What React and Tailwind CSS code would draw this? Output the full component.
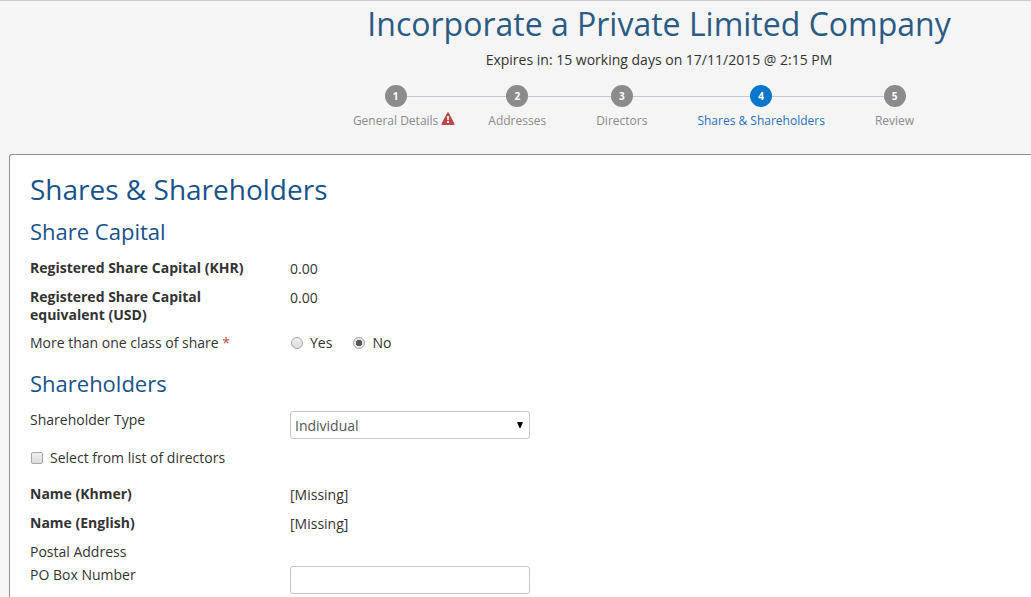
import React, { useState } from "react";
import clsx from "clsx";

const steps = [
  { label: "General Details", warning: true },
  { label: "Addresses" },
  { label: "Directors" },
  { label: "Shares & Shareholders", current: true },
  { label: "Review" },
];

const WarningIcon = () => (
  <svg
    viewBox="0 0 14 13"
    className="absolute left-full top-0 ml-[3px] h-[13px] w-[14px]"
    role="img"
    aria-label="Has errors"
  >
    <path
      d="M6.2.8a.9.9 0 0 1 1.6 0l5.6 10.8a.9.9 0 0 1-.8 1.3H1.4a.9.9 0 0 1-.8-1.3z"
      fill="#b94a48"
    />
    <path d="M6 4h2l-.3 4H6.3zM6 9h2v2H6z" fill="#f5f5f5" />
  </svg>
);

const Steps = () => (
  <ol className="flex justify-center pr-[51px]">
    {steps.map(({ label, warning, current }, i) => (
      <li
        key={label}
        className="flex flex-col"
        aria-current={current ? "step" : undefined}
      >
        <div className="flex items-center">
          <span
            className={clsx("h-px flex-1", i > 0 && "bg-[#c6c8d4]")}
          ></span>
          <span
            className={clsx(
              "flex size-[22px] items-center justify-center rounded-full text-[10px] font-bold text-white",
              current ? "bg-[#0a77cb]" : "bg-[#8b8b8b]"
            )}
          >
            {i + 1}
          </span>
          <span
            className={clsx(
              "h-px flex-1",
              i < steps.length - 1 && "bg-[#c6c8d4]"
            )}
          ></span>
        </div>
        <a
          href="#"
          className={clsx(
            "relative mx-[25px] mt-[5px] whitespace-nowrap text-[12px] leading-[18px]",
            current ? "text-[#2a70bd]" : "text-[#8b8b8b]"
          )}
        >
          {label}
          {warning && <WarningIcon />}
        </a>
      </li>
    ))}
  </ol>
);

const Row = ({ label, value }) => (
  <div className="flex">
    <dt className="w-[260px] pr-10 font-bold">{label}</dt>
    <dd className="pt-px">{value}</dd>
  </div>
);

const Radio = ({ label, ...props }) => (
  <label className="flex items-center gap-[7px]">
    <input
      type="radio"
      className="size-3 appearance-none rounded-full border border-[#a6a6a6] bg-linear-to-b from-[#f0f0f0] to-[#dcdcdc] checked:bg-radial checked:from-[#555] checked:from-45% checked:to-[#e6e6e6] checked:to-50%"
      {...props}
    />
    {label}
  </label>
);

export default function App() {
  const [multiClass, setMultiClass] = useState("no");

  return (
    <div className="flex min-h-screen flex-col overflow-hidden border-t border-[#cbcbcb] bg-[#f5f5f5] font-['Open_Sans',sans-serif] text-[14px] leading-[18px] text-[#333]">
      <header className="pl-[287px] text-center">
        <h1 className="whitespace-nowrap pt-[3px] text-[32px] leading-10 text-[#2a5b84]">
          Incorporate a Private Limited Company
        </h1>
        <p className="pb-4 pt-[7px]">
          Expires in: 15 working days on 17/11/2015 @ 2:15 PM
        </p>
        <Steps />
      </header>

      <main className="ml-[9px] mt-6 flex-1 rounded-tl-[3px] border-l border-t border-[#8f8f8f] bg-white px-5">
        <h2 className="pt-[15px] text-[28px] leading-[38px] text-[#195289]">
          Shares &amp; Shareholders
        </h2>

        <section>
          <h3 className="pt-2 text-[22px] leading-[30px] text-[#195289]">
            Share Capital
          </h3>
          <dl className="mt-[13px] flex flex-col gap-[10px]">
            <Row label="Registered Share Capital (KHR)" value="0.00" />
            <Row
              label="Registered Share Capital equivalent (USD)"
              value="0.00"
            />
          </dl>
          <fieldset className="mt-[10px] flex">
            <legend className="float-left w-[260px]">
              More than one class of share{" "}
              <span className="text-[#b94a48]">*</span>
            </legend>
            <div className="flex gap-[21px] pl-px">
              <Radio
                label="Yes"
                name="multiClass"
                checked={multiClass === "yes"}
                onChange={() => setMultiClass("yes")}
              />
              <Radio
                label="No"
                name="multiClass"
                checked={multiClass === "no"}
                onChange={() => setMultiClass("no")}
              />
            </div>
          </fieldset>
        </section>

        <section>
          <h3 className="pt-4 text-[22px] leading-[30px] text-[#195289]">
            Shareholders
          </h3>
          <div className="mt-[13px] flex">
            <label htmlFor="type" className="w-[260px]">
              Shareholder Type
            </label>
            <div className="relative w-[240px]">
              <select
                id="type"
                className="h-7 w-full appearance-none rounded-[3px] border border-[#c4c4c4] bg-white px-1 pt-0.5 text-[#555]"
              >
                <option>Individual</option>
                <option>Company</option>
              </select>
              <svg
                viewBox="0 0 6 6"
                className="pointer-events-none absolute right-[7px] top-[11px] size-[6px]"
              >
                <path d="M0 0h6L3.5 6h-1z" fill="#000" />
              </svg>
            </div>
          </div>

          <label className="mt-[10px] flex items-center gap-[7px] pl-px">
            <input
              type="checkbox"
              className="size-3 appearance-none rounded-xs border border-[#a6a6a6] bg-linear-to-b from-[#f0f0f0] to-[#dcdcdc] checked:from-[#555] checked:to-[#555]"
            />
            Select from list of directors
          </label>

          <dl className="mt-[18px] flex flex-col gap-[10px]">
            <Row label="Name (Khmer)" value="[Missing]" />
            <Row label="Name (English)" value="[Missing]" />
          </dl>

          <h4 className="mt-[10px]">Postal Address</h4>
          <div className="mt-[5px] flex">
            <label htmlFor="poBox" className="w-[260px]">
              PO Box Number
            </label>
            <input
              id="poBox"
              type="text"
              className="h-7 w-[240px] rounded-[3px] border border-[#c4c4c4] bg-white px-1"
            />
          </div>
        </section>
      </main>
    </div>
  );
}
